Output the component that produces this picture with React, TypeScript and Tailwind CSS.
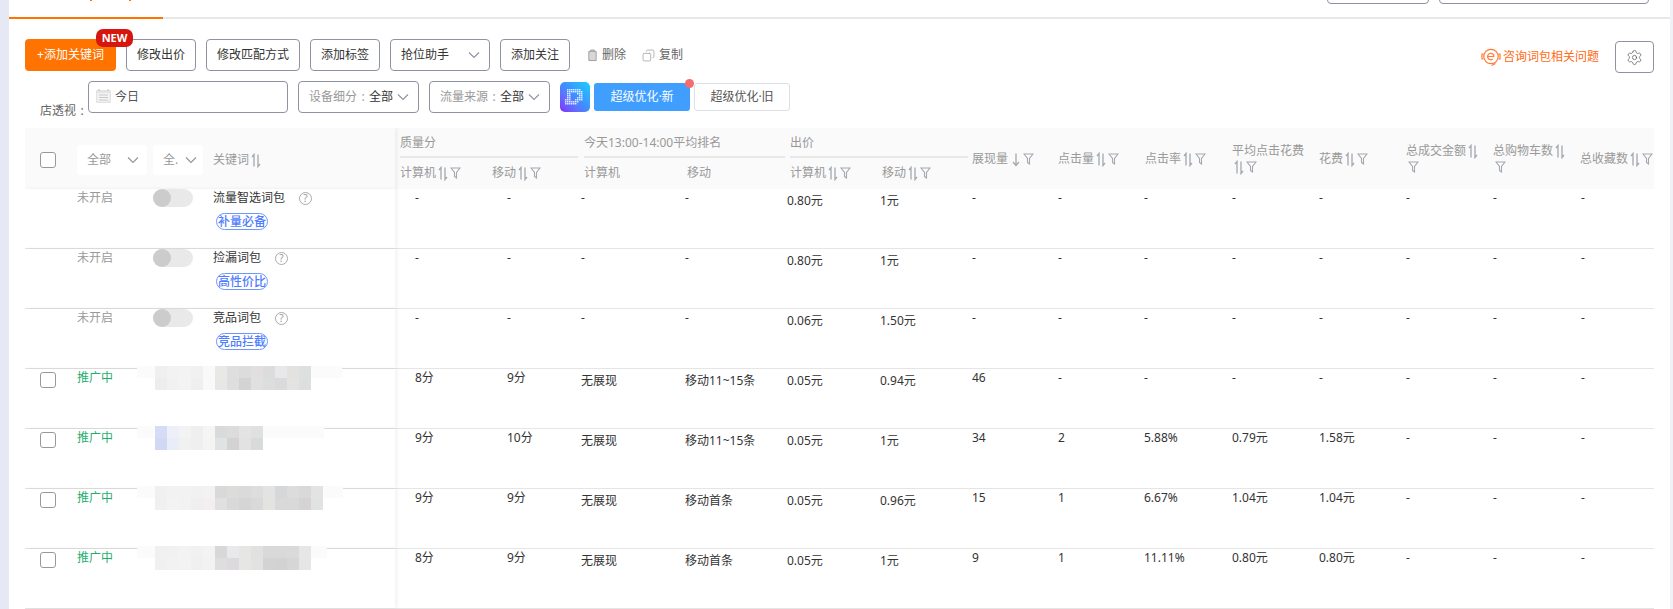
import React from 'react';
import { Copy, Settings } from 'lucide-react';

const columns =
  'grid-cols-[92px_92px_103px_103px_92px_90px_86px_87px_87px_87px_87px_87px_87px_74px]';

const cellOffset = [
  'pl-[15px]',
  'pl-[15px]',
  '-ml-[3px]',
  '-ml-[2px]',
  '-ml-[3px] pt-[3px]',
  '-ml-[2px] pt-[3px]',
  '',
  '',
  '-ml-px',
  '',
  '',
  '',
  '',
  'ml-px',
];

const metricHeaders = [
  { label: '展现量', active: true, place: 'col-start-7' },
  { label: '点击量', active: false, place: 'col-start-8' },
  { label: '点击率', active: false, place: 'col-start-9' },
  { label: '平均点击花费', active: false, place: 'col-start-10' },
  { label: '花费', active: false, place: 'col-start-11' },
  { label: '总成交金额', active: false, place: 'col-start-12' },
  { label: '总购物车数', active: false, place: 'col-start-13' },
  { label: '总收藏数', active: false, place: 'col-start-14' },
];

const logoDots = [
  '.#######..',
  '.########.',
  '.##...###.',
  '.##....##.',
  '.##...###.',
  '###..####.',
  '#######...',
  '######....',
];

interface Row {
  status: 'off' | 'on';
  name?: string;
  tag?: string;
  mosaic?: string[][];
  faint?: number;
  cells: string[];
}

const rows: Row[] = [
  {
    status: 'off',
    name: '流量智选词包',
    tag: '补量必备',
    cells: ['-', '-', '-', '-', '0.80元', '1元', '-', '-', '-', '-', '-', '-', '-', '-'],
  },
  {
    status: 'off',
    name: '捡漏词包',
    tag: '高性价比',
    cells: ['-', '-', '-', '-', '0.80元', '1元', '-', '-', '-', '-', '-', '-', '-', '-'],
  },
  {
    status: 'off',
    name: '竞品词包',
    tag: '竞品拦截',
    cells: ['-', '-', '-', '-', '0.06元', '1.50元', '-', '-', '-', '-', '-', '-', '-', '-'],
  },
  {
    status: 'on',
    faint: 205,
    mosaic: [
      ['#efefef', '#f2f2f2', '#f3f3f3', '#f1f1f1', '#f9f9f9', '#e8e8e6', '#dfdfdf', '#dcdcdc', '#e1dfdf', '#dcdcdc', '#e8e8ea', '#e3e2df', '#dde0e0'],
      ['#ededed', '#f1f1f1', '#f2f3f2', '#efefef', '#f9f9f9', '#e7e7e5', '#dddedf', '#d3d3d3', '#e0e0e0', '#dcddde', '#dadadc', '#e3e3e2', '#dcdfde'],
    ],
    cells: ['8分', '9分', '无展现', '移动11~15条', '0.05元', '0.94元', '46', '-', '-', '-', '-', '-', '-', '-'],
  },
  {
    status: 'on',
    faint: 187,
    mosaic: [
      ['#d6dcf5', '#edf0f8', '#f2f3f2', '#efefef', '#f5f5f4', '#d9dadb', '#dcdcdc', '#e3e3e3', '#dfe1e0'],
      ['#d0d8f3', '#e9edf8', '#f1f2f0', '#efefef', '#f4f4f2', '#dfe3e3', '#d3d3d3', '#e1e2e1', '#d9dbda'],
    ],
    cells: ['9分', '10分', '无展现', '移动11~15条', '0.05元', '1元', '34', '2', '5.88%', '0.79元', '1.58元', '-', '-', '-'],
  },
  {
    status: 'on',
    faint: 206,
    mosaic: [
      ['#f0f0f0', '#f2f2f2', '#f2f2f2', '#f1f1f1', '#f3f1f1', '#d9d9d9', '#dcdcda', '#dadada', '#dcdddd', '#e3e3e1', '#d6d7d8', '#dcdcdc', '#d9d9d9', '#e2e3e3'],
      ['#f0f0f0', '#f3f3f3', '#f2f2f2', '#efefef', '#f3efef', '#e0e0e0', '#d9d9d9', '#d4d5d4', '#d9d9d9', '#e3e3e1', '#d9d9d9', '#d9d9d9', '#d5d3d3', '#e2e2e2'],
    ],
    cells: ['9分', '9分', '无展现', '移动首条', '0.05元', '0.96元', '15', '1', '6.67%', '1.04元', '1.04元', '-', '-', '-'],
  },
  {
    status: 'on',
    faint: 190,
    mosaic: [
      ['#f0f0f0', '#f1f1f1', '#f3f3f3', '#f1f1f1', '#f3f3f3', '#d8d8d8', '#e9e8ea', '#e6e6e4', '#e1e1e1', '#d9d9d9', '#d9d9d9', '#dadada', '#e6e6e6'],
      ['#f0f0f0', '#f2f2f2', '#f3f3f3', '#f0f0f0', '#f3f1f1', '#dededf', '#dcdadc', '#e6e6e4', '#e2e2e3', '#d3d3d2', '#d1d2d1', '#d6d6d6', '#e6e6e7'],
    ],
    cells: ['8分', '9分', '无展现', '移动首条', '0.05元', '1元', '9', '1', '11.11%', '0.80元', '0.80元', '-', '-', '-'],
  },
];

const SortIcon = ({ active = false }: { active?: boolean }) =>
  active ? (
    <svg viewBox="0 0 10 14" className="inline-block w-[10px] h-[15px] align-[-4px] ml-[3px]" fill="none" stroke="#a3a8b0" strokeWidth="1.3">
      <path d="M5 1v12M2 9.5L5 13l3-3.5" />
    </svg>
  ) : (
    <svg viewBox="0 0 10 14" className="inline-block w-[10px] h-[15px] align-[-4px] ml-[2px]" fill="none" stroke="#a3a8b0" strokeWidth="1.3">
      <path d="M3 13V1L1 3.5M7 1v12l2-2.5" />
    </svg>
  );

const FilterIcon = () => (
  <svg viewBox="0 0 11 12" className="inline-block w-[11px] h-[12px] align-[-2px] ml-[2px]" fill="none" stroke="#a3a8b0" strokeWidth="1.1">
    <path d="M1 1h9L6.5 5.5V11L4.5 9.5v-4z" />
  </svg>
);

const Chevron = ({ className = '' }: { className?: string }) => (
  <svg viewBox="0 0 12 8" className={`w-[12px] h-[8px] ${className}`} fill="none" stroke="#8f92a1" strokeWidth="1.1">
    <path d="M1 1.5l5 5 5-5" />
  </svg>
);

const Checkbox = () => (
  <span className="block w-[16px] h-[16px] rounded-[3px] border border-[#999] bg-white" />
);

const Colon = () => <span className="inline-block w-[12px] text-center">:</span>;

const HelpIcon = () => (
  <span className="inline-flex items-center justify-center w-[13px] h-[13px] rounded-full border border-[#aaa] text-[10px] leading-none text-[#999] ml-[14px]">
    ?
  </span>
);

const Toggle = () => (
  <span className="block w-[40px] h-[18px] rounded-full bg-[#e9e9e9]">
    <span className="block w-[18px] h-[18px] rounded-full bg-[#cccccc]" />
  </span>
);

const Logo = () => (
  <div className="w-[30px] h-[30px] rounded-[5px] bg-gradient-to-tr from-[#7a24ff] via-[#3f8cff] to-[#00d0ff] flex items-center justify-center">
    <svg viewBox="0 0 20 16" className="w-[20px] h-[16px]" fill="#ffffff" opacity="0.8">
      {logoDots.map((line, y) =>
        line.split('').map((dot, x) =>
          dot === '#' ? <rect key={`${x}-${y}`} x={x * 2} y={y * 2} width="1.5" height="1.5" /> : null,
        ),
      )}
    </svg>
  </div>
);

const HeaderText = ({ label, sort = true, filter = true, active = false }: { label: string; sort?: boolean; filter?: boolean; active?: boolean }) => (
  <span>
    {label}
    {sort && <SortIcon active={active} />}
    {filter && <FilterIcon />}
  </span>
);

const Button = ({ children, className = '' }: { children?: React.ReactNode; className?: string }) => (
  <div className={`h-[32px] rounded-[4px] border border-[#8f92a1] bg-white flex items-center justify-center text-[#333] ${className}`}>
    {children}
  </div>
);

const Mosaic = ({ data, faint }: { data: string[][]; faint: number }) => (
  <div className="absolute left-[-58px] top-[-3px] z-20">
    <div className="absolute left-[-18px] top-0 h-[12px] bg-[#fbfbfb]" style={{ width: faint }} />
    <div className="relative">
      {data.map((line, i) => (
        <div className="flex" key={i}>
          {line.map((color, j) => (
            <div className="w-[12px] h-[12px]" key={j} style={{ background: color }} />
          ))}
        </div>
      ))}
    </div>
  </div>
);

export default function App() {
  return (
    <div
      className="flex w-full h-[609px] overflow-hidden bg-white text-[12px] leading-[18px] text-[#333]"
      style={{ fontFamily: '"Noto Sans", "Noto Sans CJK SC", sans-serif' }}
    >
      <div className="w-[9px] shrink-0 bg-[#e6e9f3]" />
      <main className="flex-1 min-w-0">
        <div className="flex h-[19px] border-b-2 border-[#e8e8e8]">
          <div className="w-[154px] h-[19px] border-b-2 border-[#ff7300]">
            <div className="flex justify-between w-[41px] ml-[81px]">
              <span className="w-[2px] h-px bg-[#ff7300]" />
              <span className="w-[2px] h-px bg-[#ff7300]" />
            </div>
          </div>
          <div className="flex gap-[10px] ml-auto pr-[21px] -mt-[28px] h-[32px]">
            <Button className="w-[102px]" />
            <Button className="w-[210px]" />
          </div>
        </div>

        <div className="pl-[16px] pr-[16px]">
          <div className="flex items-start gap-[10px] pt-[20px] h-[52px]">
            <div className="relative w-[91px] h-[32px] rounded-[4px] bg-[#ff7300] text-white flex items-center justify-center">
              +添加关键词
              <span className="absolute left-[71px] -top-[10px] w-[37px] h-[18px] rounded-[7px] bg-[#d6170f] text-[11px] font-bold leading-[18px] text-center">
                NEW
              </span>
            </div>
            <Button className="w-[70px]">修改出价</Button>
            <Button className="w-[94px]">修改匹配方式</Button>
            <Button className="w-[70px]">添加标签</Button>
            <Button className="w-[100px] !justify-between pl-[10px] pr-[9px]">
              抢位助手
              <Chevron />
            </Button>
            <Button className="w-[70px]">添加关注</Button>
            <div className="flex items-center h-[32px] ml-[7px] text-[#666]">
              <svg viewBox="0 0 12 14" className="w-[11px] h-[13px] mr-[4px]" fill="#d8d8d8" stroke="#9a9a9a" strokeWidth="1">
                <path d="M4 2V1h4v1M2 2.5h8v10H2z" />
              </svg>
              删除
            </div>
            <div className="flex items-center h-[32px] ml-[6px] text-[#666]">
              <Copy size={13} strokeWidth={1.2} color="#8f8f8f" className="mr-[4px] -scale-x-100" />
              复制
            </div>
            <div className="flex items-center h-[32px] mt-[2px] ml-auto text-[#ff6a13]">
              <svg viewBox="0 0 20 20" className="w-[20px] h-[20px] mr-[2px]" fill="none" stroke="#ff7a33" strokeWidth="1.2">
                <circle cx="10" cy="9.5" r="7.2" />
                <path d="M2.5 7h-1.5v5h1.5M17.5 7h1.5v5h-1.5M6.5 9.5h6.5M13 9.5a3.2 3.2 0 1 0-1 2.4M14.5 16.5l-4 2" />
              </svg>
              咨询词包相关问题
            </div>
            <Button className="w-[39px] mt-[2px] ml-[6px]">
              <Settings size={17} strokeWidth={1} color="#555" />
            </Button>
          </div>

          <div className="flex items-start h-[32px] mt-[10px] pl-[15px]">
            <span className="w-[48px] mt-[21px] text-[#666]">
              店透视
              <Colon />
            </span>
            <div className="w-[200px] h-[32px] rounded-[4px] border border-[#8f92a1] flex items-center pl-[7px] text-[#555]">
              <svg viewBox="0 0 15 14" className="w-[15px] h-[14px] mr-[4px] -mt-[3px]">
                <rect x="0" y="1" width="15" height="13" rx="1" fill="#e4e4e4" />
                <rect x="1.5" y="4" width="12" height="8.5" fill="#f4f4f4" />
                <path d="M3 0v2M12 0v2M3 6h9M3 8.5h9M3 11h9" stroke="#c8c8c8" strokeWidth="1.2" />
              </svg>
              今日
            </div>
            <div className="w-[121px] h-[32px] ml-[10px] rounded-[4px] border border-[#8f92a1] flex items-center justify-between pl-[10px] pr-[9px]">
              <span className="text-[#999]">
                设备细分
                <Colon />
                <span className="text-[#333]">全部</span>
              </span>
              <Chevron />
            </div>
            <div className="w-[121px] h-[32px] ml-[10px] rounded-[4px] border border-[#8f92a1] flex items-center justify-between pl-[10px] pr-[9px]">
              <span className="text-[#999]">
                流量来源
                <Colon />
                <span className="text-[#333]">全部</span>
              </span>
              <Chevron />
            </div>
            <div className="ml-[10px] mt-px">
              <Logo />
            </div>
            <div className="relative w-[96px] h-[28px] mt-[2px] ml-[4px] rounded-[3px] bg-[#409eff] text-white flex items-center justify-center">
              超级优化·新
              <span className="absolute -right-[4px] -top-[4px] w-[9px] h-[9px] rounded-full bg-[#f56c6c]" />
            </div>
            <div className="w-[96px] h-[28px] mt-[2px] ml-[4px] rounded-[3px] border border-[#dcdfe6] text-[#555] flex items-center justify-center">
              超级优化·旧
            </div>
          </div>

          <div className="mt-[15px] overflow-hidden">
            <div className="flex h-[61px] bg-[#fafafa] text-[#999]">
              <div className="relative z-10 flex items-center w-[370px] shrink-0 pt-[2px] shadow-[2px_0_4px_rgba(0,0,0,0.06)]">
                <div className="w-[52px] pl-[15px]">
                  <Checkbox />
                </div>
                <div className="w-[70px] h-[30px] rounded-[4px] bg-white flex items-center justify-between pl-[10px] pr-[8px]">
                  全部
                  <Chevron />
                </div>
                <div className="w-[50px] h-[30px] ml-[6px] rounded-[4px] bg-white flex items-center justify-between pl-[10px] pr-[6px]">
                  全.
                  <Chevron />
                </div>
                <span className="ml-[10px]">
                  关键词
                  <SortIcon />
                </span>
              </div>
              <div className={`grid ${columns} grid-rows-[30px_31px] pl-[5px] flex-1`}>
                <div className="col-span-2 mr-[6px] border-b-2 border-[#e8e8e8] pt-[6px]">质量分</div>
                <div className="col-span-2 mr-[5px] border-b-2 border-[#e8e8e8] pt-[6px]">今天13:00-14:00平均排名</div>
                <div className="col-span-2 mr-[4px] border-b-2 border-[#e8e8e8] pt-[6px]">出价</div>
                {metricHeaders.map((head, i) => (
                  <div
                    key={head.label}
                    className={`${head.place} row-start-1 row-span-2 self-center leading-[16px] ${i === 7 ? '' : 'pr-[6px]'}`}
                  >
                    <HeaderText label={head.label} active={head.active} />
                  </div>
                ))}
                <div className="col-start-1 row-start-2 pt-[6px]"><HeaderText label="计算机" /></div>
                <div className="col-start-2 row-start-2 pt-[6px]"><HeaderText label="移动" /></div>
                <div className="col-start-3 row-start-2 pt-[6px]">计算机</div>
                <div className="col-start-4 row-start-2 pt-[6px]">移动</div>
                <div className="col-start-5 row-start-2 pt-[6px]"><HeaderText label="计算机" /></div>
                <div className="col-start-6 row-start-2 pt-[6px]"><HeaderText label="移动" /></div>
              </div>
            </div>

            {rows.map((row, index) => (
              <div className="flex h-[60px] border-b border-[#e5e5e5]" key={index}>
                <div className="relative z-10 flex items-start w-[370px] shrink-0 bg-white shadow-[2px_0_4px_rgba(0,0,0,0.06)]">
                  <div className="w-[52px] pl-[15px] pt-[3px]">
                    {row.status === 'on' && <Checkbox />}
                  </div>
                  <div className={`w-[76px] ${row.status === 'on' ? 'text-[#1fae6e]' : 'text-[#999]'}`}>
                    {row.status === 'on' ? '推广中' : '未开启'}
                  </div>
                  <div className="w-[60px] h-[18px]">
                    {row.status === 'off' && <Toggle />}
                  </div>
                  <div className="relative">
                    {row.mosaic && <Mosaic data={row.mosaic} faint={row.faint ?? 0} />}
                    {row.name && (
                      <div className="flex items-center h-[18px]">
                        {row.name}
                        <HelpIcon />
                      </div>
                    )}
                    {row.tag && (
                      <div className="w-[52px] h-[17px] mt-[6px] ml-[3px] rounded-full border border-[#6f95ff] text-[#4f7dff] text-center leading-[15px] font-medium">
                        {row.tag}
                      </div>
                    )}
                  </div>
                </div>
                <div className={`grid ${columns} pl-[5px] flex-1`}>
                  {row.cells.map((cell, i) => (
                    <div className={`${cellOffset[i]} ${row.status === 'on' && (i === 2 || i === 3) ? 'pt-[3px]' : ''}`} key={i}>
                      {cell}
                    </div>
                  ))}
                </div>
              </div>
            ))}
          </div>
        </div>
      </main>
      <div className="w-[3px] shrink-0 bg-[#f0f1f6]" />
    </div>
  );
}
